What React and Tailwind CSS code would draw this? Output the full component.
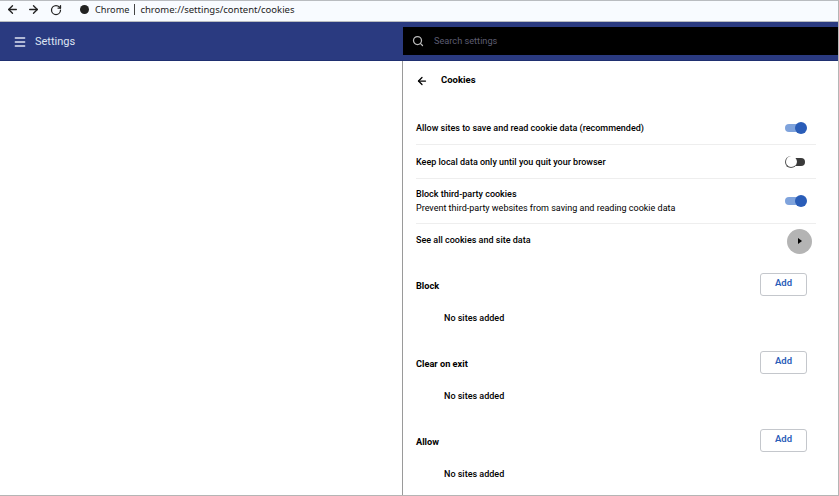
import React from "react";
import { ArrowLeft, ArrowRight, RotateCw, Menu, Search } from "lucide-react";

function Toggle({ on }) {
  return on ? (
    <div className="relative w-[22px] h-[12px] shrink-0">
      <div className="absolute left-0 top-[2px] w-[20px] h-[8px] rounded-full bg-[#7fa3dc]" />
      <div className="absolute right-0 top-0 w-[12px] h-[12px] rounded-full bg-[#2a5db8]" />
    </div>
  ) : (
    <div className="relative w-[22px] h-[12px] shrink-0">
      <div className="absolute right-[2px] top-[2px] w-[18px] h-[8px] rounded-full bg-[#3a3a3a]" />
      <div className="absolute left-0 top-0 w-[12px] h-[12px] rounded-full bg-white border-b border-l border-[#555]" />
    </div>
  );
}

function Row({ children, right, className }) {
  return (
    <div className={"flex items-center justify-between mr-[22px] pr-[9px] border-b border-[#eeeeee] " + className}>
      <div className="text-[9px] leading-[14px] font-medium text-black">{children}</div>
      {right}
    </div>
  );
}

function Section({ title }) {
  return (
    <div className="h-[78px]">
      <div className="flex justify-between pr-[31px]">
        <div className="pt-[7px] text-[9.2px] leading-[14px] font-bold text-black">{title}</div>
        <button className="w-[47px] h-[23px] mt-[1px] rounded-[3px] border border-[#c4c7cc] bg-white text-[9.5px] font-semibold leading-[18px] pb-[3px] text-[#2a5db8]">Add</button>
      </div>
      <div className="pl-[28px] mt-[15px] text-[9px] leading-[14px] font-medium text-black">No sites added</div>
    </div>
  );
}

export default function App() {
  return (
    <div className="w-[839px] h-[496px] bg-white flex flex-col overflow-hidden border-r border-[#b5b5b5]" style={{ fontFamily: "Roboto, sans-serif" }}>
      <div className="h-[22px] shrink-0 flex items-center bg-[#f8fbff] border-t border-b border-[#b9bcc0] pl-[6px] pb-[3px] text-[#222]">
        <ArrowLeft size={13} strokeWidth={2.5} />
        <ArrowRight size={13} strokeWidth={2.5} className="ml-[8px]" />
        <RotateCw size={12} strokeWidth={2.5} className="ml-[10px]" />
        <div className="ml-[18px] w-[9px] h-[9px] rounded-full bg-[#222]" />
        <span className="ml-[6px] text-[9.2px] leading-none" style={{ fontFamily: "'Noto Sans', sans-serif" }}>Chrome</span>
        <div className="ml-[5px] w-px h-[11px] bg-[#444]" />
        <span className="ml-[5px] text-[9.5px] leading-none" style={{ fontFamily: "'Noto Sans', sans-serif" }}>chrome://settings/content/cookies</span>
      </div>
      <div className="h-[39px] shrink-0 flex bg-[#2a3a80] border-b border-[#1f2f70]">
        <div className="w-[403px] flex items-center pl-[13px] pt-[2px] text-[#dfe4f2]">
          <Menu size={14} strokeWidth={2.5} />
          <span className="ml-[8px] text-[11px]">Settings</span>
        </div>
        <div className="flex-1 my-[5px] bg-black flex items-center pl-[9px]">
          <Search size={12} strokeWidth={2.5} className="text-[#bbbbbb]" />
          <span className="ml-[10px] text-[9.2px] text-[#5c5c70]">Search settings</span>
        </div>
      </div>
      <div className="flex-1 flex min-h-0 border-b border-[#b5b5b5]">
        <div className="w-[403px] shrink-0 border-r border-[#9a9a9a]" />
        <div className="flex-1 pl-[13px]">
          <div className="h-[39px] mb-[12px] flex items-center">
            <ArrowLeft size={12} strokeWidth={2.5} className="text-black" />
            <span className="ml-[13px] text-[9.5px] font-bold text-black">Cookies</span>
          </div>
          <Row className="h-[33px]" right={<Toggle on />}>Allow sites to save and read cookie data (recommended)</Row>
          <Row className="h-[34px]" right={<Toggle />}>Keep local data only until you quit your browser</Row>
          <Row className="h-[45px]" right={<Toggle on />}>
            <div>Block third-party cookies</div>
            <div className="font-normal">Prevent third-party websites from saving and reading cookie data</div>
          </Row>
          <div className="h-[34px] flex items-center justify-between mr-[22px] pr-[4px] text-[9px] font-medium text-black">
            <span>See all cookies and site data</span>
            <div className="w-[25px] h-[25px] rounded-full bg-[#b4b4b4] flex items-center justify-center">
              <div className="w-0 h-0 border-y-[3px] border-y-transparent border-l-[4px] border-l-black" />
            </div>
          </div>
          <div className="mt-[14px]">
            <Section title="Block" />
            <Section title="Clear on exit" />
            <Section title="Allow" />
          </div>
        </div>
      </div>
    </div>
  );
}
